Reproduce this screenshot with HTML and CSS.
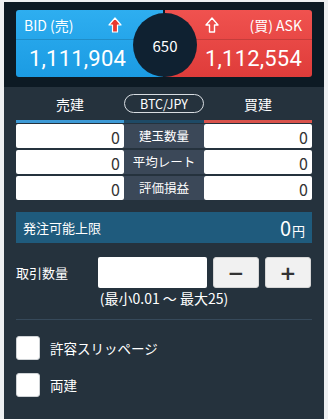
FILE: index.html
```html
<!DOCTYPE html>
<html lang="ja">
<head>
    <meta charset="UTF-8">
    <meta name="viewport" content="width=device-width, initial-scale=1.0">
    <title>BTC/JPY 注文</title>
    <link rel="stylesheet" href="styles.css">
</head>
<body>
    <div class="panel">
        <div class="quotes">
            <div class="quote bid">
                <div class="quote-head">
                    <span>BID (売)</span>
                    <svg class="arrow" width="14" height="16" viewBox="0 0 14 16">
                        <path d="M7 1 L13 8 L9.5 8 L9.5 15 L4.5 15 L4.5 8 L1 8 Z" fill="#e8382f" stroke="#fff" stroke-width="1.2" stroke-linejoin="round"/>
                    </svg>
                </div>
                <div class="quote-price">1,111,904</div>
            </div>
            <div class="quote ask">
                <div class="quote-head">
                    <svg class="arrow" width="14" height="16" viewBox="0 0 14 16">
                        <path d="M7 1 L13 8 L9.5 8 L9.5 15 L4.5 15 L4.5 8 L1 8 Z" fill="none" stroke="#fff" stroke-width="1.4" stroke-linejoin="round"/>
                    </svg>
                    <span>(買) ASK</span>
                </div>
                <div class="quote-price">1,112,554</div>
            </div>
            <div class="spread">650</div>
        </div>

        <div class="body">
            <div class="tabs">
                <div class="tab">売建</div>
                <div class="pair">BTC/JPY</div>
                <div class="tab">買建</div>
            </div>
            <div class="tab-bar">
                <span class="bar-sell"></span>
                <span class="bar-mid"></span>
                <span class="bar-buy"></span>
            </div>

            <div class="positions">
                <div class="cell">0</div>
                <div class="label">建玉数量</div>
                <div class="cell">0</div>
                <div class="cell">0</div>
                <div class="label">平均レート</div>
                <div class="cell">0</div>
                <div class="cell">0</div>
                <div class="label">評価損益</div>
                <div class="cell">0</div>
            </div>

            <div class="limit">
                <span>発注可能上限</span>
                <span class="limit-val">0<small>円</small></span>
            </div>

            <div class="qty">
                <span class="qty-label">取引数量</span>
                <input class="qty-input" type="text">
                <button class="step">−</button>
                <button class="step">+</button>
            </div>
            <div class="hint">(最小0.01 ～ 最大25)</div>

            <div class="divider"></div>

            <label class="check"><span class="box"></span>許容スリッページ</label>
            <label class="check"><span class="box"></span>両建</label>
        </div>
    </div>
</body>
</html>
```

FILE: styles.css
```css
body {
    margin: 0;
    background: #eef0f2;
    font-family: "Noto Sans CJK JP", "Noto Sans", sans-serif;
    color: #fff;
}
.panel {
    margin: 2px 4px 4px;
    background: #25323d;
    border-radius: 0 0 3px 3px;
    overflow: hidden;
}
.quotes {
    position: relative;
    display: flex;
    gap: 2px;
    background: #0d1a24;
    padding: 8px 12px 10px;
}
.quote {
    flex: 1;
    height: 67px;
    display: flex;
    flex-direction: column;
}
.bid {
    background: linear-gradient(#2eaef0, #1b9be3);
    border-radius: 3px 0 0 3px;
}
.ask {
    background: linear-gradient(#f0524f, #df3c3a);
    border-radius: 0 3px 3px 0;
}
.quote-head {
    height: 29px;
    display: flex;
    align-items: center;
    justify-content: space-between;
    font-size: 14px;
    border-bottom: 1px solid rgba(0,0,0,0.15);
}
.bid .quote-head { padding: 0 41px 0 8px; }
.ask .quote-head { padding: 0 10px 0 40px; }
.quote-price {
    flex: 1;
    display: flex;
    align-items: center;
    font-size: 22px;
    font-family: Roboto, sans-serif;
    letter-spacing: 0.2px;
}
.bid .quote-price { padding-left: 13px; }
.ask .quote-price { justify-content: flex-end; padding-right: 10px; }
.spread {
    position: absolute;
    left: 129px;
    top: 11px;
    width: 64px;
    height: 64px;
    border-radius: 50%;
    background: #0f2131;
    display: flex;
    align-items: center;
    justify-content: center;
    font-size: 15px;
}
.body {
    padding: 0 12px 14px;
}
.tabs {
    display: grid;
    grid-template-columns: 108px 80px 108px;
    align-items: center;
    height: 33px;
}
.tab {
    text-align: center;
    font-size: 14px;
}
.pair {
    text-align: center;
    font-size: 12.5px;
    border: 1px solid #d8dde2;
    border-radius: 10px;
    line-height: 17px;
}
.tab-bar {
    display: grid;
    grid-template-columns: 108px 80px 108px;
    height: 3px;
}
.bar-sell { background: #3d9ad6; }
.bar-mid { background: #1e4a66; }
.bar-buy { background: #d9534c; }
.positions {
    display: grid;
    grid-template-columns: 108px 80px 108px;
    grid-auto-rows: 24px;
    row-gap: 2px;
    margin-top: 1px;
}
.cell {
    background: #fff;
    color: #333;
    text-align: right;
    padding-right: 4px;
    font-size: 16px;
    line-height: 26px;
    border-radius: 2px;
}
.label {
    background: #3b4858;
    text-align: center;
    font-size: 12.5px;
    line-height: 24px;
}
.limit {
    margin-top: 12px;
    height: 31px;
    background: #1f5b7d;
    display: flex;
    align-items: center;
    justify-content: space-between;
    padding: 0 7px;
    font-size: 13px;
}
.limit-val { font-size: 20px; }
.limit-val small { font-size: 13px; margin-left: 1px; }
.qty {
    margin-top: 14px;
    display: flex;
    align-items: center;
}
.qty-label {
    width: 82px;
    font-size: 13px;
}
.qty-input {
    width: 109px;
    height: 31px;
    box-sizing: border-box;
    border: none;
    border-radius: 2px;
    background: #fff;
    margin-right: 6px;
}
.step {
    width: 46px;
    height: 31px;
    border: 1px solid #d6d6d6;
    border-radius: 3px;
    background: #f1f1f1;
    color: #333;
    font-size: 20px;
    font-weight: bold;
    margin-right: 6px;
    padding: 0;
    font-family: "DejaVu Sans", sans-serif;
}
.step:last-child { margin-right: 0; }
.hint {
    text-align: center;
    font-size: 14px;
    margin-top: 0;
}
.divider {
    height: 1px;
    background: #36495a;
    margin: 11px 0 16px;
}
.check {
    display: flex;
    align-items: center;
    gap: 10px;
    font-size: 13.5px;
    margin-bottom: 13px;
}
.box {
    width: 24px;
    height: 24px;
    box-sizing: border-box;
    background: #fff;
    border: 1px solid #cfd3d6;
    border-radius: 3px;
}
```
